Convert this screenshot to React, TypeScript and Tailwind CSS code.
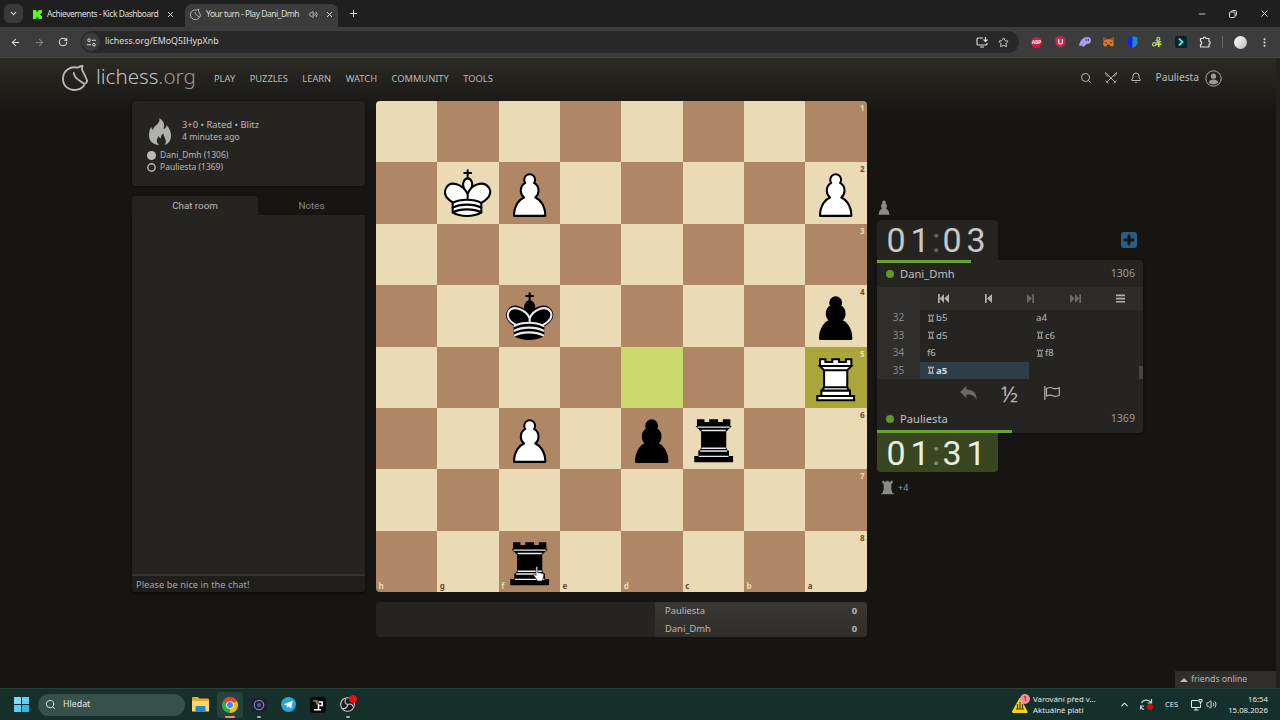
import type { ReactNode } from 'react';
import {
    ArrowLeft,
    ArrowRight,
    Bell,
    ChevronDown,
    ChevronUp,
    EllipsisVertical,
    Minus,
    Plus,
    RotateCw,
    Search,
    Star,
    Volume2,
    X
} from 'lucide-react';

type PieceName = 'wk' | 'wp' | 'wr' | 'bk' | 'bp' | 'br';

const PIECES: Record<string, PieceName> = {
    g2: 'wk',
    f2: 'wp',
    a2: 'wp',
    f4: 'bk',
    a4: 'bp',
    a5: 'wr',
    f6: 'wp',
    d6: 'bp',
    c6: 'br',
    f8: 'br'
};

const FILES = ['h', 'g', 'f', 'e', 'd', 'c', 'b', 'a'];
const RANKS = [1, 2, 3, 4, 5, 6, 7, 8];

const MOVES = [
    { n: 32, white: 'Rb5', black: 'a4' },
    { n: 33, white: 'Rd5', black: 'Rc6' },
    { n: 34, white: 'f6', black: 'Rf8' },
    { n: 35, white: 'Ra5', black: '', active: true }
];

const PAWN =
    'M22.5 9c-2.21 0-4 1.79-4 4 0 .89.29 1.71.78 2.38C17.33 16.5 16 18.59 16 21c0 2.03.94 3.84 2.41 5.03-3 1.06-7.41 5.55-7.41 13.47h23c0-7.92-4.41-12.41-7.41-13.47 1.47-1.19 2.41-3 2.41-5.03 0-2.41-1.33-4.5-3.28-5.62.49-.67.78-1.49.78-2.38 0-2.21-1.79-4-4-4z';
const KING_BODY =
    'M11.5 37c5.5 3.5 15.5 3.5 21 0v-7s9-4.5 6-10.5c-4-6.5-13.5-3.5-16 4V27v-3.5c-3.5-7.5-13-10.5-16-4-3 6 5 10 5 10V37z';
const KING_HEAD = 'M22.5 25s4.5-7.5 3-10.5c0 0-1-2.5-3-2.5s-3 2.5-3 2.5c-1.5 3 3 10.5 3 10.5';
const KING_BANDS = 'M11.5 30c5.5-3 15.5-3 21 0m-21 3.5c5.5-3 15.5-3 21 0m-21 3.5c5.5-3 15.5-3 21 0';
const ROOK = 'M9 39h27v-3H9zM12 36v-4h21v4zM12.5 32l1.5-2.5h17l1.5 2.5zM14 29.5V17h17v12.5zM14 17l-3-3h23l-3 3zM11 14V9h4v2h5V9h5v2h5V9h4v5z';

function Piece({ name }: { name: PieceName }) {
    const white = name[0] === 'w';
    return (
        <svg
            viewBox="0 0 45 45"
            className="h-full w-full"
            fill={white ? '#fff' : '#000'}
            stroke="#000"
            strokeWidth="1.5"
            strokeLinecap="round"
            strokeLinejoin="round"
        >
            {name[1] === 'p' && <path d={PAWN} />}
            {name[1] === 'r' && <path d={ROOK} strokeLinecap="butt" strokeLinejoin="miter" />}
            {name === 'br' && (
                <path d="M12 35.5h21M13 31.5h19M14 29.5h17M14 16.5h17M11 14h23" stroke="#ececec" strokeWidth="1" />
            )}
            {name[1] === 'k' && (
                <>
                    <path d="M22.5 11.63V6M20 8h5" />
                    <path d={KING_HEAD} />
                    <path d={KING_BODY} />
                    {white ? (
                        <path d={KING_BANDS} fill="none" />
                    ) : (
                        <g fill="none" stroke="#ececec">
                            <path d="M32 29.5s8.5-4 6.03-9.65C34.15 14 25 18 22.5 24.5l.01 2.1-.01-2.1C20 18 9.906 14 6.997 19.85c-2.497 5.65 4.853 9 4.853 9" />
                            <path d={KING_BANDS} />
                        </g>
                    )}
                </>
            )}
        </svg>
    );
}

function LichessLogo({ className }: { className: string }) {
    return (
        <svg viewBox="0 0 26 26" className={className} fill="none" stroke="currentColor" strokeWidth="1.8" strokeLinejoin="round" strokeLinecap="round">
            <path d="M20.5 1c-2 .2-3.600.7-4.700 1.600C8 1 1 5.500 1 14c0 7 5.500 11 11.500 11 4.300 0 7.500-1.700 9.500-4.500" />
            <path d="M20.500 1c-.7 1.700-.7 3-.2 4.200 1.500 3.400 3.700 7 4.900 10.800-.5 1.500-1.700 2.600-3.200 2.900-4-3.400-10-5.400-10.200-10.900" />
        </svg>
    );
}

function Board() {
    return (
        <div className="relative grid h-[491px] w-[490.66px] grid-cols-8 grid-rows-8 overflow-hidden rounded-[4px]">
            {RANKS.map((rank, y) =>
                FILES.map((file, x) => {
                    const dark = (x + y) % 2 === 1;
                    const key = `${file}${rank}`;
                    let bg = dark ? 'bg-[#af8764]' : 'bg-[#ebdab6]';
                    if (key === 'd5') bg = 'bg-[#ccda6d]';
                    if (key === 'a5') bg = 'bg-[#aaa63a]';
                    const label = dark ? 'text-[#ebdab6]' : 'text-[#6b4a30]';
                    return (
                        <div key={key} className={`relative ${bg}`}>
                            {PIECES[key] && <Piece name={PIECES[key]} />}
                            {file === 'a' && (
                                <span className={`absolute top-[3px] right-[2px] text-[8px] leading-[8px] font-bold ${label}`}>{rank}</span>
                            )}
                            {rank === 8 && (
                                <span className={`absolute bottom-[2px] left-[2.500px] text-[8px] leading-[8px] font-bold ${label}`}>{file}</span>
                            )}
                        </div>
                    );
                })
            )}
            {/* Hand cursor */}
            <svg viewBox="0 0 12 16" className="absolute top-[465px] left-[157px] h-[16px] w-[12px]" fill="#fff" stroke="#222" strokeWidth=".7">
                <path d="M3 1.500c0-1.200 1.700-1.200 1.700 0v5l1.500.2 1.500.4 1.600.4c1 .3 1.500 1 1.400 2l-.6 3-1 2.500H4.500L2.600 12 .8 9.500c-.7-1 .5-1.700 1.200-1l1 1z" />
            </svg>
        </div>
    );
}

function Tab({ icon, title, width, active, children }: { icon: ReactNode; title: string; width: string; active?: boolean; children?: ReactNode }) {
    return (
        <div className={`flex h-[23px] items-center self-end pb-[3px] ${width} ${active ? 'rounded-t-[7px] bg-[#3c3c3c]' : ''}`}>
            {icon}
            <span className="ml-[5px] flex-1 whitespace-nowrap">{title}</span>
            {children}
            <X size={9} strokeWidth={2.500} className="mr-[4px] shrink-0" />
        </div>
    );
}

function BrowserChrome() {
    return (
        <div className="font-['Noto_Sans',sans-serif] text-[#dedede]">
            <div className="flex h-[27px] items-center bg-[#1f1f1f] pl-[4px] text-[8.500px] tracking-[-0.48px]">
                <div className="flex h-[19px] w-[19px] items-center justify-center rounded-[6px] bg-[#3a3a3a]">
                    <ChevronDown size={9} strokeWidth={3} />
                </div>
                <Tab
                    width="ml-[9px] w-[147px]"
                    title="Achievements - Kick Dashboard"
                    icon={
                        <svg viewBox="0 0 9 9" className="ml-[1px] h-[9px] w-[9px] shrink-0" fill="#53fc18">
                            <path d="M0 0h3.500v2h1V1h1V0H9v3H8v1H7v1h1v1h1v3H5.500V8h-1V7h-1v2H0z" />
                        </svg>
                    }
                />
                <Tab
                    active
                    width="ml-[6px] w-[153px] pl-[5px]"
                    title="Your turn - Play Dani_Dmh"
                    icon={<LichessLogo className="h-[11px] w-[11px] shrink-0" />}
                >
                    <Volume2 size={9} className="mr-[7px] shrink-0" />
                </Tab>
                <Plus size={11} strokeWidth={2} className="ml-[10px]" />
                <div className="mr-[10px] ml-auto flex items-center gap-[22px]">
                    <Minus size={10} />
                    <svg viewBox="0 0 8 8" className="h-[8px] w-[8px]" fill="none" stroke="currentColor" strokeWidth="1">
                        <rect x=".5" y="2" width="5.500" height="5.500" rx="1" />
                        <path d="M2.500 2V1.500a1 1 0 0 1 1-1h3a1 1 0 0 1 1 1v3a1 1 0 0 1-1 1H6" />
                    </svg>
                    <X size={11} strokeWidth={2} />
                </div>
            </div>
            <div className="flex h-[31px] items-center border-b border-[#4a4a4a] bg-[#3c3c3c] pl-[10px]">
                <ArrowLeft size={11} strokeWidth={2.200} />
                <ArrowRight size={11} strokeWidth={2.200} className="ml-[13px] text-[#858585]" />
                <RotateCw size={10} strokeWidth={2.500} className="ml-[13px]" />
                <div className="ml-[13px] flex h-[22px] w-[938px] items-center rounded-full bg-[#282828] pr-[10px] pl-[1px]">
                    <div className="flex h-[18px] w-[18px] items-center justify-center rounded-full bg-[#3c3c3c]">
                        <svg viewBox="0 0 10 10" className="h-[9px] w-[9px]" fill="none" stroke="currentColor" strokeWidth="1.100">
                            <circle cx="2.300" cy="2.500" r="1.500" />
                            <path d="M5.500 2.500H10M0 7.500h4.500" />
                            <circle cx="7.700" cy="7.500" r="1.500" />
                        </svg>
                    </div>
                    <span className="ml-[5px] text-[8.850px]">lichess.org/EMoQ5IHypXnb</span>
                    <svg viewBox="0 0 12 11" className="ml-auto h-[11px] w-[12px]" fill="none" stroke="currentColor" strokeWidth="1.100">
                        <path d="M7 1H2Q1 1 1 2v5q0 1 1 1h8q1 0 1-1V6M4 10h4M9.500 0v4M7.500 2.500l2 2 2-2" />
                    </svg>
                    <Star size={11} className="ml-[10px]" />
                </div>
                <div className="ml-[12px] flex h-[11px] w-[11px] items-center justify-center rounded-full bg-[#cf1b48] text-[4.500px] font-bold text-white">ABP</div>
                <svg viewBox="0 0 11 12" className="ml-[13px] h-[12px] w-[11px]">
                    <path d="M5.500 0L10.500 1.500v5q0 3-5 5.200Q.5 9.500.5 6.500v-5z" fill="#cf2451" />
                    <path d="M3.600 3v3.200q0 1.800 1.900 1.800t1.900-1.800V3" fill="none" stroke="#fff" strokeWidth="1.200" />
                </svg>
                <svg viewBox="0 0 12 10" className="ml-[13px] h-[10px] w-[12px]" fill="#a79bea">
                    <path d="M0 8C1 4 4 0 8 0c3 0 4 1.500 4 3.500S10.500 7 9 7c-.9 0-1-.5-1-.5C6.500 9 4.500 10 3 9.500l.2-1.500C2 9 .5 9.500 0 8z" />
                    <path d="M7.300 2v2M9.300 2v2" stroke="#3c3c3c" strokeWidth=".9" />
                </svg>
                <svg viewBox="0 0 12 11" className="ml-[12px] h-[10px] w-[11px]">
                    <path d="M0 0l4.500 2.500h3L12 0l-.6 5 .6 3-1.500 2.500L8 10H4l-2.500.5L0 8l.6-3z" fill="#e27625" />
                    <path d="M2.500 5l2 1.500L3 7.500zM9.500 5l-2 1.500 1.500 1zM4.500 8.500h3V10h-3z" fill="#2b1b18" />
                    <path d="M0 0l4.500 2.500L1 4zM12 0L7.500 2.500 11 4z" fill="#9c4a20" />
                </svg>
                <svg viewBox="0 0 11 12" className="ml-[13px] h-[12px] w-[11px]">
                    <path d="M5.500 0L.5 1.500v5Q1 10 5.500 12z" fill="#0a22ff" />
                    <path d="M5.500 0l5 1.500v5q-.5 3.500-5 5.500z" fill="#1687c9" />
                </svg>
                <svg viewBox="0 0 11 11" className="ml-[14px] h-[10px] w-[10px]" fill="none" stroke="#b9cd8c" strokeWidth="1.300">
                    <circle cx="7" cy="2" r="1.600" />
                    <circle cx="2.500" cy="8" r="1.900" />
                    <path d="M7 3.500L5 7M4 4l6 1" />
                    <path d="M4.500 8h6M7.500 5v6" stroke="#c5ef24" strokeWidth="1.800" />
                </svg>
                <div className="ml-[13px] flex h-[12px] w-[12px] items-center justify-center rounded-[2px] bg-[#04252b]">
                    <svg viewBox="0 0 8 8" className="h-[8px] w-[8px]" fill="none" stroke="#4ff0dc" strokeWidth="1.800">
                        <path d="M2 .5L5.500 4 2 7.500" />
                    </svg>
                </div>
                <svg viewBox="0 0 12 12" className="ml-[12px] h-[12px] w-[12px]" fill="none" stroke="currentColor" strokeWidth="1.200" strokeLinejoin="round">
                    <path d="M1.500 2.500h2.700c0-2 2.800-2 2.800 0h3v3c1.700 0 1.700 2.600 0 2.600V11H1.500V8.300c1.800 0 1.800-2.800 0-2.800z" />
                </svg>
                <div className="ml-[11px] h-[12px] w-px bg-[#666]" />
                <div className="ml-[11px] h-[13px] w-[13px] rounded-full bg-linear-to-br from-white to-[#bcbcbc]" />
                <EllipsisVertical size={11} strokeWidth={2.500} className="ml-[12px]" />
            </div>
        </div>
    );
}

function SiteHeader() {
    return (
        <header className="flex h-[40px] items-center pl-[62px] text-[#bababa]">
            <LichessLogo className="h-[26px] w-[26px]" />
            <span className="mt-[-4px] ml-[8px] w-[101px] text-[20.600px] leading-[26px] font-light whitespace-nowrap text-[#c4c4c4]">
                lichess<span className="text-[#999]">.org</span>
            </span>
            <nav className="mt-px ml-[17px] flex gap-[14.500px] text-[9.300px]">
                <span>PLAY</span>
                <span>PUZZLES</span>
                <span>LEARN</span>
                <span>WATCH</span>
                <span>COMMUNITY</span>
                <span>TOOLS</span>
            </nav>
            <div className="mr-[58px] ml-auto flex items-center">
                <Search size={12} strokeWidth={2} />
                <svg viewBox="0 0 12 12" className="ml-[13px] h-[12px] w-[12px]" fill="none" stroke="currentColor" strokeWidth=".9">
                    <path d="M.5.500L10.500 10.500M11.500.500L1.500 10.500M.5 8.500l3 3M8.500 11.500l3-3M.5.500l.3 1.800 2.500 2.500M11.500.500l-.3 1.800-2.500 2.500" />
                </svg>
                <Bell size={12} strokeWidth={2} className="ml-[13px]" />
                <span className="ml-[14px] text-[10.200px]">Pauliesta</span>
                <svg viewBox="0 0 17 17" className="ml-[6px] h-[17px] w-[17px]" fill="none" stroke="#aaa" strokeWidth="1">
                    <circle cx="8.500" cy="8.500" r="7.700" />
                    <circle cx="8.500" cy="6.200" r="2.600" fill="#999" stroke="none" />
                    <path d="M3.800 12.500c.4-4 9-4 9.400 0-2 2.500-7.400 2.500-9.400 0z" fill="#999" stroke="none" />
                </svg>
            </div>
        </header>
    );
}

function SidePanel() {
    return (
        <aside className="w-[233px] shrink-0 text-[#bababa]">
            <div className="h-[85px] rounded-[4px] bg-[#262421] pt-[17px] pl-[15px] shadow-[0_0_3px_#000a]">
                <div className="flex">
                    <svg viewBox="0 0 22 27" className="ml-[2px] h-[27px] w-[22px]" fill="#b0b0b0">
                        <path d="M10.300 0c6 4 5 7.500 4.300 11 2-.5 2.700-2 2.900-4C20.500 10 22 14 22 17.500c0 5-2.500 8.300-6.500 9.500 1.300-1.500 1.800-3.500.8-6-.5-1.600-1.800-3-1.800-5.500-2 1-2.800 2.800-2.600 5-1.500-.5-2-1.300-2-2.500-2 2.500-3.400 6 .3 9C3 26.500 0 22.500 0 17.500c0-4 1-6.500 2.200-8.500.4 1.500 1 2.500 2 3C3.500 8 12 6 10.300 0z" />
                    </svg>
                    <div className="ml-[11px]">
                        <div className="text-[9.400px] leading-[13px]">3+0 • Rated • Blitz</div>
                        <div className="text-[8.600px] leading-[13px]">4 minutes ago</div>
                    </div>
                </div>
                <div className="mt-[4px] flex h-[12px] items-center text-[8.500px]">
                    <span className="mr-[4px] h-[9px] w-[9px] rounded-full bg-[#bababa]" />
                    Dani_Dmh (1306)
                </div>
                <div className="flex h-[12px] items-center text-[8.500px]">
                    <svg viewBox="0 0 9 9" className="mr-[4px] h-[9px] w-[9px]" fill="none" stroke="#bababa" strokeWidth="1.400">
                        <circle cx="4.500" cy="4.500" r="3.700" />
                    </svg>
                    Pauliesta (1369)
                </div>
            </div>
            <div className="mt-[10px] flex h-[19px] items-center text-center font-['Roboto',sans-serif] text-[9.800px] leading-[19px]">
                <div className="w-[126px] rounded-t-[4px] bg-[#262421]">Chat room</div>
                <div className="flex-1 text-[#888]">Notes</div>
            </div>
            <div className="flex h-[377px] flex-col justify-end rounded-b-[4px] bg-[#262421] shadow-[0_2px_3px_#0008]">
                <div className="h-[18px] rounded-b-[4px] border-t-2 border-[#35332f] bg-[#1f1e1b] pl-[4px] text-[9.350px] leading-[17px] text-[#a5a5a5]">
                    Please be nice in the chat!
                </div>
            </div>
        </aside>
    );
}

function Clock({ time, running }: { time: string; running?: boolean }) {
    return (
        <div
            className={`flex w-[121px] items-center pl-[7px] font-['Roboto',sans-serif] text-[34px] leading-none ${
                running ? 'h-[39px] rounded-b-[4px] bg-[#384722] text-[#e8f0e0]' : 'h-[40px] rounded-t-[4px] bg-[#262421] text-[#c8c8c8]'
            }`}
        >
            {time.split('').map((c, i) => (
                <span key={i} className={c === ':' ? 'flex w-[8px] justify-center opacity-40' : 'flex w-[24px] justify-center'}>
                    {c}
                </span>
            ))}
        </div>
    );
}

function PlayerRow({ name, rating }: { name: string; rating: number }) {
    return (
        <div className="flex h-[22px] items-center pr-[8px] pl-[9px] text-[11.200px]">
            <span className="mr-[6px] h-[8px] w-[8px] rounded-full bg-[#629924]" />
            <span className="text-[#c0c0c0]">{name}</span>
            <span className="ml-auto text-[10.600px] text-[#999]">{rating}</span>
        </div>
    );
}

// Rook moves are shown with a figurine in place of the letter
function San({ move }: { move: string }) {
    if (move[0] !== 'R') return <>{move}</>;
    return (
        <span className="flex items-center">
            <svg viewBox="8 7 29 34" className="mr-px h-[8px] w-[8px]" fill="none" stroke="currentColor" strokeWidth="3.500">
                <path d="M10 38h25M13 33h19M16 32V17M29 32V17M12 15h21M12 9v6M33 9v6M19 9v5M26 9v5" />
            </svg>
            {move.slice(1)}
        </span>
    );
}

function GamePanel() {
    return (
        <section className="mt-[99px] ml-[10px] w-[266px]">
            <svg viewBox="10 8 25 32" className="ml-[1px] h-[15px] w-[12px]" fill="#8a8a8a">
                <path d={PAWN} />
            </svg>
            <div className="mt-[5px] flex items-center justify-between">
                <Clock time="01:03" />
                <div className="mr-[6px] flex h-[16px] w-[16px] items-center justify-center rounded-[3px] bg-[#2b5d83] text-[#161512]">
                    <Plus size={14} strokeWidth={5} />
                </div>
            </div>
            <div className="h-[173px] rounded-r-[4px] bg-[#262421] shadow-[0_1px_3px_#0009]">
                <div className="h-[27px]">
                    <div className="h-[3px] w-[94px] bg-[#6ca234]" />
                    <PlayerRow name="Dani_Dmh" rating={1306} />
                </div>
                <div className="flex h-[23px] items-center justify-between bg-[linear-gradient(90deg,#302e2c_43px,#2e2c29_43px)] pr-[18px] pl-[61px] text-[#b0b0b0]">
                    <svg viewBox="0 0 11 9" className="h-[9px] w-[11px]" fill="currentColor">
                        <path d="M0 0h1.700v9H0zM6 0v9L1.700 4.500zM11 0v9L6.300 4.500z" />
                    </svg>
                    <svg viewBox="0 0 7 9" className="h-[9px] w-[7px]" fill="currentColor">
                        <path d="M0 0h1.700v9H0zM7 0v9L2 4.500z" />
                    </svg>
                    <svg viewBox="0 0 7 9" className="h-[9px] w-[7px] text-[#6c6a68]" fill="currentColor">
                        <path d="M5.300 0H7v9H5.300zM0 0v9l5-4.500z" />
                    </svg>
                    <svg viewBox="0 0 11 9" className="h-[9px] w-[11px] text-[#6c6a68]" fill="currentColor">
                        <path d="M9.300 0H11v9H9.300zM5 0v9l4.300-4.500zM0 0v9l4.700-4.500z" />
                    </svg>
                    <svg viewBox="0 0 9 9" className="h-[9px] w-[9px]" fill="currentColor">
                        <path d="M0 .5h9v1.700H0zM0 3.700h9v1.700H0zM0 6.900h9v1.700H0z" />
                    </svg>
                </div>
                <div className="relative h-[69px] overflow-hidden text-[9.600px] leading-[17.500px] text-[#b8b8b8]">
                    {MOVES.map((m) => (
                        <div key={m.n} className="mt-[-1px] mb-[1px] flex h-[17.500px]">
                            <span className="w-[43px] bg-[#302e2c] text-center text-[10px] text-[#888]">{m.n}</span>
                            <span className={`w-[109px] pl-[7px] ${m.active ? 'bg-[#2f3d47] font-bold text-[#d5dde3]' : ''}`}>
                                <San move={m.white} />
                            </span>
                            <span className="pl-[7px]">
                                <San move={m.black} />
                            </span>
                        </div>
                    ))}
                    <div className="absolute right-0 bottom-0 h-[13px] w-[4px] bg-[#484643]" />
                </div>
                <div className="flex h-[27px] items-center pl-[83px]">
                    <svg viewBox="0 0 17 14" className="h-[14px] w-[17px]" fill="#6c6a68">
                        <path d="M6.500 0v3.500C13 3.500 17 7 16.500 14c-1.500-4-4-5.500-10-5.500V12L0 6z" />
                    </svg>
                    <span className="ml-[24px] w-[19px] text-[22px] leading-[26px] text-[#b5b5b5]">½</span>
                    <svg viewBox="0 0 16 14" className="ml-[24px] h-[14px] w-[16px]" fill="none" stroke="#b0b0b0" strokeWidth="1.200">
                        <path d="M.8 0v14M2.500 2.500c3-1.800 4.500-1.200 6.500-.3s4 .6 6.300-.5v7.500c-2.300 1.200-4.300 1.500-6.300.5s-3.500-1.200-6.500.3z" />
                    </svg>
                </div>
                <div className="flex h-[27px] flex-col justify-end">
                    <PlayerRow name="Pauliesta" rating={1369} />
                    <div className="h-[3px] w-[135px] shrink-0 bg-[#6ca234]" />
                </div>
            </div>
            <Clock time="01:31" running />
            <div className="mt-[8px] ml-[4px] flex items-center text-[9px] text-[#999]">
                <svg viewBox="8 8 29 32" className="h-[15px] w-[13px]" fill="#8a8a8a">
                    <path d={ROOK} />
                </svg>
                <span className="ml-[4px]">+4</span>
            </div>
        </section>
    );
}

function Crosstable() {
    return (
        <div className="mt-[10px] flex h-[35px] w-[491px] overflow-hidden rounded-[4px] bg-[#262421] text-[9.400px] text-[#bababa]">
            <div className="ml-auto w-[212px] bg-linear-to-b from-[#3a3834] to-[#302e2a] pr-[10px] pl-[10px] leading-[17.500px]">
                <div className="flex justify-between">
                    Pauliesta<b>0</b>
                </div>
                <div className="flex justify-between">
                    Dani_Dmh<b>0</b>
                </div>
            </div>
        </div>
    );
}

function Taskbar() {
    return (
        <footer className="flex h-[32px] items-center border-t border-[#28423b] bg-[#15302a] pl-[14px] font-['Noto_Sans',sans-serif] text-[#e4e8e6]">
            <div className="grid h-[15px] w-[15px] grid-cols-2 gap-px">
                <i className="bg-[#83dcfb]" />
                <i className="bg-[#5fd0fa]" />
                <i className="bg-[#5ccdf9]" />
                <i className="bg-[#35b6f3]" />
            </div>
            <div className="ml-[9px] flex h-[22px] w-[147px] items-center rounded-full bg-[#38504a] pl-[7px] text-[8.800px]">
                <Search size={11} />
                <span className="ml-[7px]">Hledat</span>
            </div>
            <svg viewBox="0 0 17 15" className="ml-[7px] h-[15px] w-[17px]">
                <path d="M0 1q0-1 1-1h5l1.500 1.500H16q1 0 1 1V14H0z" fill="#e4a92f" />
                <path d="M0 4h17v10.500H0z" fill="#fcd667" />
                <path d="M3.500 10q0-1 1-1h8q1 0 1 1v4.500h-10z" fill="#2b87bf" />
            </svg>
            <div className="relative ml-[8px] flex h-[26px] w-[26px] items-center justify-center rounded-[3px] bg-[#27433d]">
                <svg viewBox="0 0 48 48" className="h-[16px] w-[16px]">
                    <path d="M24 24L3.200 12A24 24 0 0 1 44.800 12z" fill="#e94235" />
                    <path d="M24 24L44.800 12A24 24 0 0 1 24 48z" fill="#fabc05" />
                    <path d="M24 24v24A24 24 0 0 1 3.200 12z" fill="#34a853" />
                    <circle cx="24" cy="24" r="11.500" fill="#fff" />
                    <circle cx="24" cy="24" r="9" fill="#4285f4" />
                </svg>
                <span className="absolute bottom-0 h-[2px] w-[10px] rounded-full bg-[#f08a8a]" />
            </div>
            <div className="relative ml-[8px] flex h-[26px] w-[16px] items-center justify-center">
                <svg viewBox="0 0 16 14" className="h-[14px] w-[16px]">
                    <rect width="16" height="14" rx="2" fill="#1e2030" />
                    <circle cx="8" cy="7" r="4.700" fill="#1b1e38" stroke="#7b83b4" strokeWidth="1.200" />
                    <circle cx="8" cy="7" r="2" fill="#575f9d" />
                </svg>
                <span className="absolute bottom-0 h-[2px] w-[4px] rounded-full bg-[#a5b0ad]" />
            </div>
            <svg viewBox="0 0 15 15" className="ml-[14px] h-[15px] w-[15px]">
                <circle cx="7.500" cy="7.500" r="7.500" fill="#2ba3dd" />
                <path d="M2.800 7.300l8.900-3.600-1.500 7.800-2.800-2-1.400 1.200-.5-2.400z" fill="#fff" />
            </svg>
            <div className="ml-[14px] flex h-[16px] w-[16px] items-center justify-center rounded-[3px] bg-[#080a09]">
                <svg viewBox="0 0 12 12" className="h-[12px] w-[12px]" fill="none" stroke="#fff" strokeWidth="1.500">
                    <path d="M6.500 4.500v6M6.500 3h3.700v3.500H7.500M2 10.700h7" />
                    <path d="M1.500 2h3.500v3.500" stroke="#8f9d45" />
                </svg>
            </div>
            <div className="relative ml-[13px] flex h-[26px] w-[17px] items-center justify-center">
                <svg viewBox="0 0 16 16" className="h-[15px] w-[15px]" fill="none" stroke="#d6d6d6" strokeWidth="1.100">
                    <circle cx="8" cy="8" r="7.300" fill="#171a1a" />
                    <path d="M8 8c-3-1-3.500-4-1.500-6M8 8c3-1.500 5.500 0 6 2.500M8 8c0 3-2.500 5-5.500 4" />
                </svg>
                <span className="absolute top-[3px] right-[-1px] h-[8px] w-[8px] rounded-full bg-[#e80e0e]" />
                <span className="absolute bottom-0 h-[2px] w-[4px] rounded-full bg-[#a5b0ad]" />
            </div>

            <div className="mr-[12px] ml-auto flex items-center leading-[10.500px]">
                <div className="relative mr-[3px] h-[22px] w-[18px]">
                    <svg viewBox="0 0 17 15" className="mt-[4px] h-[15px] w-[17px]">
                        <path d="M7.500 0L0 13.500Q0 15 1.500 15h13q1.500 0 1-1.500L8.500 0z" fill="#f3d51f" />
                        <path d="M8 4v7M5.500 6v5M10.500 6v5M4 11h8" stroke="#463c08" strokeWidth="1.200" />
                    </svg>
                    <span className="absolute top-0 right-0 h-[10px] w-[10px] rounded-full bg-[#f28b9b] text-center text-[7px] leading-[10px] text-[#222]">1</span>
                </div>
                <div className="w-[82px] text-[7.800px]">
                    <div>Varování před v...</div>
                    <div>Aktuálně platí</div>
                </div>
                <ChevronUp size={11} strokeWidth={2.200} className="ml-[4px]" />
                <div className="relative ml-[10px] h-[13px] w-[13px]">
                    <svg viewBox="0 0 13 13" className="h-[13px] w-[13px]" fill="none" stroke="#cbd2cf" strokeWidth="1.200">
                        <path d="M1.500 5C3 1.500 8.500 1 11 4.500M11.500 1v4h-4M4 11.500C2 11 1 9.500.800 8M.5 11.500V8H4" />
                    </svg>
                    <span className="absolute right-0 bottom-[1px] h-[6px] w-[6px] rounded-full bg-[#d50b0b]" />
                </div>
                <span className="ml-[12px] w-[14px] text-[7.600px]">CES</span>
                <svg viewBox="0 0 12 12" className="ml-[12px] h-[12px] w-[12px]" fill="none" stroke="currentColor" strokeWidth="1">
                    <path d="M7 1.500H.5v7h9V6M5 8.500V11M3 11h4.500M9.500 5.500V3M8 .5h3V3H8z" />
                </svg>
                <Volume2 size={11} className="ml-[3px]" />
                <div className="ml-[9px] w-[42px] text-right text-[7.800px]">
                    <div>16:54</div>
                    <div>15.08.2026</div>
                </div>
            </div>
        </footer>
    );
}

export default function App() {
    return (
        <div className="flex h-[720px] w-[1280px] flex-col overflow-hidden bg-[#161512]">
            <BrowserChrome />
            <div className="relative h-[630px] bg-linear-to-b from-[#2c2a25] via-[#161512] via-[58px] to-[#161512] font-['Noto_Sans','DejaVu_Sans',sans-serif]">
                <SiteHeader />
                <main className="mt-[3px] flex pl-[132px]">
                    <SidePanel />
                    <div className="ml-[11px] w-[491px] shrink-0">
                        <Board />
                        <Crosstable />
                    </div>
                    <GamePanel />
                </main>
                <div className="absolute right-[4px] bottom-0 flex h-[17px] w-[101px] items-center bg-[#302e2c] pl-[5px] text-[8.700px] text-[#b5b5b5]">
                    <span className="mr-[3px] h-0 w-0 border-x-[4px] border-b-[4px] border-x-transparent border-b-[#bababa]" />
                    friends online
                </div>
                <div className="absolute top-0 right-0 h-full w-[4px] bg-[#22211e]" />
            </div>
            <Taskbar />
        </div>
    );
}
